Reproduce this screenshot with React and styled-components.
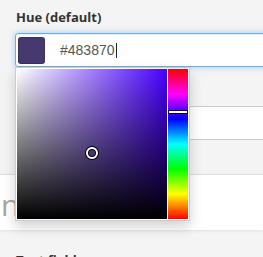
import React from 'react';
import styled, { createGlobalStyle } from 'styled-components';

const GlobalStyle = createGlobalStyle`
  html, body {
    margin: 0;
    padding: 0;
    background: #f4f4f4;
    overflow: hidden;
  }
  body {
    font-family: "Open Sans", "Liberation Sans", sans-serif;
  }
`

const hex = '#483870'
const hue = 257
const sat = 0.5
const val = 0.44

function App() {
  return (
    <Page>
      <GlobalStyle />
      <Field>
        <Label>Hue (default)</Label>
        <InputWrap>
          <Swatch color={hex} />
          <InputText>{hex}</InputText>
          <Caret />
          <Picker>
            <SatVal hue={hue}>
              <Cursor style={{ left: `${sat * 100}%`, top: `${(1 - val) * 100}%` }} />
            </SatVal>
            <HueBar>
              <HueMarker style={{ top: `${((360 - hue) / 360) * 100}%` }} />
            </HueBar>
          </Picker>
        </InputWrap>
      </Field>
      <List>
        <ListRow light />
        <ListRow />
      </List>
      <Section>
        <BigText>n</BigText>
      </Section>
      <NextLabel>Text field</NextLabel>
    </Page>
  )
}
export default App;

const Page = styled.div`
  width: 263px;
  height: 257px;
  overflow: hidden;
`

const Field = styled.div`
  padding: 8px 0 0 15px;
`

const Label = styled.div`
  font-family: "Open Sans", sans-serif;
  font-weight: 700;
  font-size: 13px;
  line-height: 18px;
  color: #333;
  padding-left: 1px;
  margin-bottom: 7px;
`

const InputWrap = styled.div`
  position: relative;
  display: flex;
  align-items: center;
  width: 300px;
  height: 32px;
  background: #fff;
  border: 1px solid #66afe9;
  border-radius: 3px 0 0 3px;
  box-shadow: inset 0 1px 1px rgba(0,0,0,.075), 0 0 6px rgba(102,175,233,.6);
  z-index: 2;
`

const Swatch = styled.div`
  width: 27px;
  height: 27px;
  margin-left: 2px;
  margin-top: 1px;
  border-radius: 3px;
  background: ${p => p.color};
  box-shadow: inset 0 0 0 1px rgba(0,0,0,.15);
`

const InputText = styled.span`
  margin-left: 15px;
  font-family: "Liberation Sans", Arial, sans-serif;
  font-size: 14px;
  color: #555;
`

const Caret = styled.span`
  display: inline-block;
  width: 1px;
  height: 15px;
  margin-left: 1px;
  background: #222;
`

const Picker = styled.div`
  position: absolute;
  left: -1px;
  top: 33px;
  display: flex;
  gap: 1px;
  padding: 1px;
  background: #fff;
  border: 1px solid #ccc;
  box-shadow: 0 6px 12px rgba(0,0,0,.175);
`

const SatVal = styled.div`
  position: relative;
  width: 150px;
  height: 150px;
  background:
    linear-gradient(to top, #000, rgba(0,0,0,0)),
    linear-gradient(to right, #fff, rgba(255,255,255,0)),
    hsl(${p => p.hue}, 100%, 50%);
`

const Cursor = styled.div`
  position: absolute;
  width: 8px;
  height: 8px;
  margin: -6px 0 0 -6px;
  border: 2px solid #fff;
  border-radius: 50%;
  box-shadow: 0 0 0 1px #000, inset 0 0 0 1px #000;
`

const HueBar = styled.div`
  position: relative;
  width: 20px;
  height: 150px;
  background: linear-gradient(to bottom,
    #ff0000 0%, #ff00ff 16.67%, #0000ff 33.33%, #00ffff 50%,
    #00ff00 66.67%, #ffff00 83.33%, #ff0000 100%);
`

const HueMarker = styled.div`
  position: absolute;
  left: 0;
  right: 0;
  height: 2px;
  margin-top: -2px;
  background: #fff;
  border: 1px solid #000;
  box-sizing: content-box;
  width: 18px;
`

const List = styled.div`
  margin: 39px 0 0 15px;
`

const ListRow = styled.div`
  height: ${p => (p.light ? 32 : 34)}px;
  background: ${p => (p.light ? '#fff' : '#f4f4f4')};
  border-top: ${p => (p.light ? '1px solid #ccc' : 'none')};
  border-bottom: ${p => (p.light ? '1px solid #ccc' : 'none')};
`

const Section = styled.div`
  height: 56px;
  background: #fff;
  border-top: 1px solid #ddd;
  box-shadow: 0 1px 3px rgba(0,0,0,.08);
  padding-top: 15px;
  box-sizing: border-box;
`

const BigText = styled.div`
  font-family: "Open Sans", sans-serif;
  font-size: 30px;
  line-height: 30px;
  color: #aca6a0;
  margin-left: 1px;
`

const NextLabel = styled.div`
  margin: 21px 0 0 16px;
  font-family: "Open Sans", sans-serif;
  font-weight: 700;
  font-size: 13px;
  line-height: 18px;
  color: #333;
`
